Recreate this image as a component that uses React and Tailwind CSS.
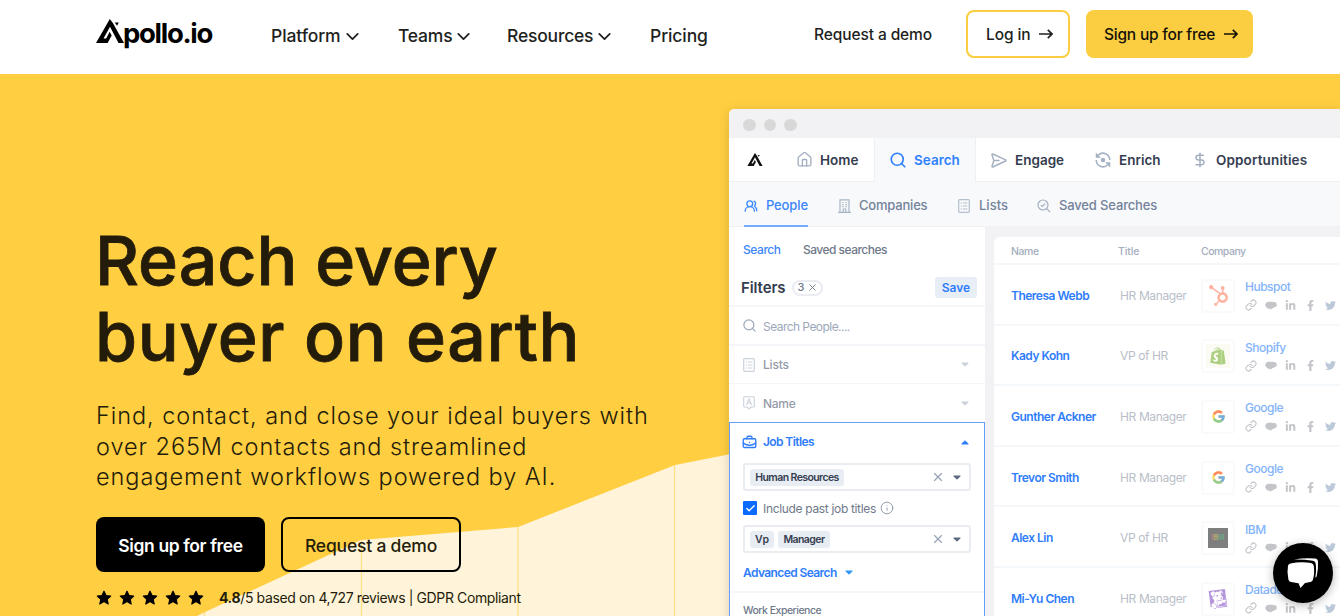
import React from 'react';
import { Search, House, DollarSign, UsersRound, ChevronDown, X, Info, Link, BriefcaseBusiness, Check } from 'lucide-react';
import { FaLinkedinIn, FaFacebookF, FaTwitter, FaHubspot, FaShopify } from 'react-icons/fa';
import { FcGoogle } from 'react-icons/fc';
import { SiDatadog } from 'react-icons/si';

const people = [
    { name: 'Theresa Webb', title: 'HR Manager', company: 'Hubspot' },
    { name: 'Kady Kohn', title: 'VP of HR', company: 'Shopify' },
    { name: 'Gunther Ackner', title: 'HR Manager', company: 'Google' },
    { name: 'Trevor Smith', title: 'HR Manager', company: 'Google' },
    { name: 'Alex Lin', title: 'VP of HR', company: 'IBM' },
    { name: 'Mi-Yu Chen', title: 'HR Manager', company: 'Datadog' },
];

const ApolloMark = ({ className }) => (
    <svg viewBox="0 0 28 24" className={className} fill="currentColor">
        <path d="M0 24 L13.8 0 L17 4.3 L28 24 H22.5 L14 7.8 L7.5 19.6 H10.2 L13.6 12.8 L15.7 16.4 L11.6 24 Z" />
        <path d="M18.8 3.6 H22.8 L21 6.8 Z" />
    </svg>
);

const Arrow = () => (
    <svg width="14" height="10" viewBox="0 0 14 10" fill="none" stroke="currentColor" strokeWidth="1.7">
        <path d="M0 5 H12.8 M8.8 0.8 L13 5 L8.8 9.2" />
    </svg>
);

const Caret = ({ className }) => (
    <svg width="8" height="5" viewBox="0 0 8 5" className={className} fill="currentColor">
        <path d="M1 0.5 H7 Q8 0.6 7.3 1.4 L4.5 4.3 Q4 4.8 3.5 4.3 L0.7 1.4 Q0 0.6 1 0.5 Z" />
    </svg>
);

const ListIcon = ({ className }) => (
    <svg width="12" height="14" viewBox="0 0 12 14" className={className} fill="none" stroke="currentColor" strokeWidth="1.2">
        <rect x="0.7" y="0.7" width="10.6" height="12.6" rx="1" />
        <path d="M2.7 4 H4 M5 4 H9.3 M2.7 7 H4 M5 7 H9.3 M2.7 10 H4 M5 10 H9.3" />
    </svg>
);

const NameIcon = () => (
    <svg width="12" height="14" viewBox="0 0 12 14" className="text-[#cbd2dc]" fill="none" stroke="currentColor" strokeWidth="1.1">
        <path d="M1.6 0.7 H10.4 Q11.3 0.7 11.3 1.6 V10 Q11.3 11 10.4 11 H8 L6 13 L4 11 H1.6 Q0.7 11 0.7 10 V1.6 Q0.7 0.7 1.6 0.7 Z" />
        <path d="M3.5 9 L6 3 L8.5 9 M4.4 7 H7.6" />
    </svg>
);

const SendIcon = () => (
    <svg width="16" height="15" viewBox="0 0 16 15" className="text-[#a3b0c2]" fill="none" stroke="currentColor" strokeWidth="1.4" strokeLinejoin="round" strokeLinecap="round">
        <path d="M1.8 1 L14.6 6.8 Q15.4 7.4 14.6 8 L1.8 14 Q0.8 14.2 1 13.2 L2.8 7.5 L1 1.8 Q0.8 0.8 1.8 1 Z M3 7.5 H8" />
    </svg>
);

const EnrichIcon = () => (
    <svg width="16" height="16" viewBox="0 0 16 16" className="text-[#a3b0c2]" fill="none" stroke="currentColor" strokeWidth="1.5">
        <path d="M3.2 3.2 A6.8 6.8 0 0 1 14.8 8 M12.8 12.8 A6.8 6.8 0 0 1 1.2 8" />
        <path d="M1 1 V5.6 H5.4 Z M15 15 V10.4 H10.6 Z" fill="currentColor" strokeWidth="0.5" />
        <circle cx="8" cy="8" r="1.5" fill="currentColor" />
    </svg>
);

const BuildingIcon = () => (
    <svg width="13" height="14" viewBox="0 0 13 14" className="text-[#a9b5c5]" fill="none" stroke="currentColor" strokeWidth="1.2">
        <path d="M2 13 V0.8 H11 V13 M0 13.3 H13 M5.2 13 V10 H7.8 V13 M4.2 3.5 H5.6 M7.4 3.5 H8.8 M4.2 5.6 H5.6 M7.4 5.6 H8.8 M4.2 7.7 H5.6 M7.4 7.7 H8.8" />
    </svg>
);

const SavedSearchIcon = () => (
    <svg width="14" height="14" viewBox="0 0 14 14" className="text-[#a3b0c2]" fill="none" stroke="currentColor" strokeWidth="1.2">
        <circle cx="6" cy="6" r="5" />
        <path d="M9.7 9.7 L13 13 M3.8 6.2 L5.4 7.5 L8.2 4.6" />
    </svg>
);

const Star = () => (
    <svg width="16" height="16" viewBox="0 0 16 16">
        <path fill="#000" stroke="#000" strokeWidth="1.2" strokeLinejoin="round" d="M8 1.2 L10 5.6 L14.7 6.1 L11.2 9.3 L12.2 14 L8 11.6 L3.8 14 L4.8 9.3 L1.3 6.1 L6 5.6 Z" />
    </svg>
);

// Solid cloud used for the CRM link
const CloudIcon = () => (
    <svg width="12" height="9" viewBox="0 0 12 9" fill="currentColor">
        <path d="M2.8 1 Q4.2 -0.2 5.6 1 Q7 0 8.2 1.2 Q11.6 0.6 11.8 3.4 Q11.8 6 9.2 6.2 Q8.6 7.4 7 7.2 Q5.6 9.4 4 7.6 Q1.8 8 1.4 6 Q-0.6 4.8 0.6 3 Q1 1.2 2.8 1 Z" />
    </svg>
);

const CompanyLogo = ({ company }) => {
    if (company === 'Hubspot') return <FaHubspot size={21} className="text-[#ffb3a2]" />;
    if (company === 'Shopify')
        return (
            <div className="w-6 h-6 bg-[#fbfbf3] flex items-center justify-center">
                <FaShopify size={18} className="text-[#acd080]" />
            </div>
        );
    if (company === 'Google') return <FcGoogle size={15} className="opacity-60" />;
    if (company === 'IBM')
        return (
            <div className="w-5 h-5 bg-[#7e7e7e] flex items-center justify-center text-[7px] font-bold">
                <span className="text-[#c08080]">I</span>
                <span className="text-[#b5b070]">B</span>
                <span className="text-[#6fa585]">M</span>
            </div>
        );
    return <SiDatadog size={20} className="text-[#b596dc]" />;
};

const Tag = ({ children, className }) => (
    <span className={`h-[17px] rounded-[3px] bg-[#e8ecf3] flex items-center justify-center text-[10.5px] font-semibold text-[#343d4f] pt-px ${className}`}>{children}</span>
);

const TagSelect = ({ children }) => (
    <div className="h-[28px] w-[228px] rounded-[3px] border-2 border-[#e9edf2] flex items-center pl-[5px] gap-1">
        {children}
        <X size={14} strokeWidth={2} className="ml-auto text-[#98a4b5]" />
        <Caret className="ml-[4px] mr-[8px] text-[#5b6a80]" />
    </div>
);

const Header = () => (
    <header className="h-[74px] bg-white flex items-start pl-24 text-[#1e1f21]">
        <div className="w-[175px] h-[30px] mt-[19px] flex items-start text-black">
            <ApolloMark className="w-[28px] h-[24px] shrink-0" />
            <span className="text-[27.5px] leading-[30px] font-bold tracking-[-1.3px] -ml-px -mt-px">pollo.io</span>
        </div>
        <nav className="flex h-[72px] items-center text-[17.5px] font-medium">
            <a className="w-[127px] flex items-center tracking-[-0.1px]">Platform<ChevronDown size={21} className="ml-px" /></a>
            <a className="w-[109px] flex items-center tracking-[-0.2px]">Teams<ChevronDown size={21} className="ml-px" /></a>
            <a className="w-[143px] flex items-center tracking-[-0.2px]">Resources<ChevronDown size={21} className="ml-px" /></a>
            <a className="w-[164px] tracking-[-0.1px]">Pricing</a>
        </nav>
        <div className="mt-[10px] h-12 flex items-center text-[15.5px] font-medium tracking-[-0.1px]">
            <a className="w-[152px] pt-0.5">Request a demo</a>
            <a className="w-[104px] h-12 rounded-lg border-2 border-[#fbce41] flex items-center justify-between pl-[18px] pr-[15px]"><span className="pt-0.5">Log in</span><Arrow /></a>
            <a className="ml-4 w-[167px] h-12 rounded-lg bg-[#fbce41] text-[#15120a] flex items-center justify-between pl-[18px] pr-[15px] tracking-[-0.22px]"><span className="pt-0.5">Sign up for free</span><Arrow /></a>
        </div>
    </header>
);

const AppNav = () => (
    <>
        <div className="h-[29px] bg-[#f2f2f4] flex items-center gap-2 pl-[14px] pt-[3px] rounded-tl-[5px]">
            <span className="w-[12.5px] h-[12.5px] rounded-full bg-[#d8d8d8]" />
            <span className="w-[12.5px] h-[12.5px] rounded-full bg-[#d8d8d8]" />
            <span className="w-[12.5px] h-[12.5px] rounded-full bg-[#d8d8d8]" />
        </div>
        <div className="h-[44px] bg-white flex text-[13.5px] font-semibold text-[#343d50]">
            <div className="w-[146px] h-[44px] flex items-center border-b border-r border-[#eef0f4] pl-[18px]">
                <ApolloMark className="w-[16px] h-[13px] text-[#111]" />
                <House size={17} strokeWidth={1.9} className="ml-[33px] text-[#a3b0c2]" />
                <span className="ml-[7px] pt-px">Home</span>
            </div>
            <div className="w-[100px] h-[44px] flex items-center bg-[#f7f9fb] text-[#2f80ff] pl-[14px]">
                <Search size={18} strokeWidth={2.2} />
                <span className="ml-[7px] pt-px">Search</span>
            </div>
            <div className="flex-1 h-[44px] flex items-center border-b border-l border-[#eef0f4] pl-[15px] pt-px">
                <SendIcon />
                <span className="ml-[8px] w-[80px]">Engage</span>
                <EnrichIcon />
                <span className="ml-[8px] w-[73px]">Enrich</span>
                <DollarSign size={16} strokeWidth={2.2} className="text-[#a3b0c2]" />
                <span className="ml-[8px] tracking-[0.13px]">Opportunities</span>
            </div>
        </div>
        <div className="h-[45px] bg-[#f7f9fb] flex text-[13px] font-medium text-[#74829a] pl-[15px] border-b border-[#eef0f4]">
            <div className="w-[64px] h-[45px] mr-[30px] flex items-center text-[#3b86fb] border-b-2 border-[#74abfd] pt-[4px] tracking-[-0.1px]">
                <UsersRound size={14} strokeWidth={2.3} />
                <span className="ml-[8px]">People</span>
            </div>
            <div className="w-[120px] flex items-center tracking-[-0.2px] pt-[3px]">
                <BuildingIcon />
                <span className="ml-[8px]">Companies</span>
            </div>
            <div className="w-[79px] flex items-center pt-[3px]">
                <ListIcon className="text-[#b5bfcd]" />
                <span className="ml-[9px]">Lists</span>
            </div>
            <div className="flex items-center tracking-[-0.15px] pt-[3px]">
                <SavedSearchIcon />
                <span className="ml-[8px]">Saved Searches</span>
            </div>
        </div>
    </>
);

const FilterPanel = () => (
    <aside className="w-[256px] shrink-0 bg-white text-[12px]">
        <div className="h-[43px] flex items-center pl-[14px] pt-0.5 font-medium">
            <span className="w-[60px] tracking-[-0.45px] text-[#3b86fb]">Search</span>
            <span className="tracking-[-0.52px] text-[#6f7989]">Saved searches</span>
        </div>
        <div className="h-[37px] flex items-center pl-3 pr-2 border-b-2 border-[#f5f7f9]">
            <span className="text-[15px] font-semibold text-[#333c4d] pt-0.5 tracking-[-0.1px]">Filters</span>
            <span className="ml-[7px] w-[31px] h-4 rounded-full border-2 border-[#eaecf1] flex items-center justify-center gap-[3px] text-[11px] font-medium text-[#6f7989]">
                3<X size={11} />
            </span>
            <span className="ml-auto w-[42px] h-[21px] rounded-[3px] bg-[#e8eef6] flex items-center justify-center font-semibold text-[#2f7dfb]">Save</span>
        </div>
        <div className="h-[39px] flex items-center pl-[13px] border-b-2 border-[#f3f5f8] text-[#9ca8ba]">
            <Search size={15} />
            <span className="ml-[6px] pt-0.5 tracking-[-0.55px]">Search People....</span>
        </div>
        <div className="h-[38px] flex items-center pl-[14px] pr-[16px] border-b border-[#f3f5f8] font-medium text-[#949ba8]">
            <ListIcon className="text-[#cbd2dc]" />
            <span className="ml-[8px] pt-px tracking-[-0.2px]">Lists</span>
            <Caret className="ml-auto text-[#cbd2dc]" />
        </div>
        <div className="h-[38px] flex items-center pl-[14px] pr-[16px] font-medium text-[#949ba8]">
            <NameIcon />
            <span className="ml-[8px] pt-px tracking-[-0.3px]">Name</span>
            <Caret className="ml-auto text-[#cbd2dc]" />
        </div>
        <div className="h-[220px] border border-[#65a0f6]">
            <div className="h-[40px] flex items-center pl-3 pr-[15px] pb-0.5 font-semibold text-[#2f7dfb]">
                <BriefcaseBusiness size={15} strokeWidth={2.2} />
                <span className="ml-[6px] tracking-[-0.6px]">Job Titles</span>
                <Caret className="ml-auto rotate-180" />
            </div>
            <div className="pl-[13px]">
                <TagSelect><Tag className="w-[94px] tracking-[-0.6px]">Human Resources</Tag></TagSelect>
                <div className="h-[34px] flex items-center text-[#6f7989]">
                    <span className="w-[14px] h-[14px] rounded-[1px] bg-[#0b6bff] flex items-center justify-center text-white">
                        <Check size={11} strokeWidth={3} />
                    </span>
                    <span className="ml-[6px] pt-0.5 tracking-[-0.33px]">Include past job titles</span>
                    <Info size={14} strokeWidth={1.6} className="ml-[4px] text-[#8d98a8]" />
                </div>
                <TagSelect>
                    <Tag className="w-[24px]">Vp</Tag>
                    <Tag className="w-[52px] tracking-[-0.6px]">Manager</Tag>
                </TagSelect>
                <div className="h-[38px] flex items-center font-semibold text-[#2f7dfb] tracking-[-0.6px] pt-px">
                    Advanced Search<Caret className="ml-[8px] text-[#2f97f5]" />
                </div>
            </div>
            <div className="border-t-2 border-[#f5f7fa] pl-[13px] pt-[10px] text-[10.5px] leading-[15px] tracking-[-0.5px] font-medium text-[#6f7989]">Work Experience</div>
        </div>
    </aside>
);

const PeopleTable = () => (
    <section className="flex-1 bg-[#f2f2f5] pl-[9px] pt-[10px]">
        <div className="bg-white rounded-tl-[6px]">
            <div className="h-[28px] flex items-center pl-[17px] pt-[3px] text-[10.5px] font-medium tracking-[-0.45px] text-[#a3adbd] border-b-2 border-[#f6f7f9]">
                <span className="w-[107px]">Name</span>
                <span className="w-[83px] tracking-[-0.1px]">Title</span>
                <span className="tracking-[-0.5px]">Company</span>
            </div>
            {people.map((p) => (
                <div key={p.name} className="h-[60.6px] flex items-center pl-[17px] pt-[3px] border-b-2 border-[#f5f8fb]">
                    <span className="w-[109px] text-[12px] font-semibold tracking-[-0.5px] text-[#2f7dfb]">{p.name}</span>
                    <span className="w-[81px] text-[12px] tracking-[-0.38px] text-[#b9bec8]">{p.title}</span>
                    <span className="w-[34px] h-[34px] rounded-[4px] border-2 border-[#fafafb] flex items-center justify-center">
                        <CompanyLogo company={p.company} />
                    </span>
                    <div className="ml-[10px] pt-px">
                        <div className="text-[12px] leading-[18px] font-medium tracking-[-0.5px] text-[#83b3fc]">{p.company}</div>
                        <div className="h-[18px] flex items-center gap-2 text-[#c3c5c9]">
                            <Link size={12} strokeWidth={2.2} />
                            <CloudIcon />
                            <FaLinkedinIn size={11} />
                            <FaFacebookF size={11} className="mx-px" />
                            <FaTwitter size={11} className="text-[#bcc9d9]" />
                        </div>
                    </div>
                </div>
            ))}
        </div>
    </section>
);

const App = () => {
    return (
        <div className="w-[1340px] h-[616px] overflow-hidden bg-white font-['Inter',sans-serif]">
            <Header />
            <main className="relative h-[542px] bg-[#ffce41] flex overflow-hidden">
                {/* Growth chart behind the copy */}
                <svg className="absolute inset-0" width="1340" height="542" viewBox="0 74 1340 542">
                    <path fill="#fff4d9" d="M197 616 L205 612 L361 540 L518 527 L675 465 L832 434 V616 Z" />
                    <path stroke="#ffe08a" strokeWidth="1.3" d="M204.5 612 V616 M361.5 540 V616 M518 527 V616 M674.5 465 V616" />
                </svg>

                <div className="relative w-[633px] shrink-0 pl-24 pt-[148px] mr-24">
                    <h1 className="text-[68px] leading-[76px] font-medium [-webkit-text-stroke:0.8px_#241c0a] tracking-[-0.05px] text-[#241c0a] whitespace-nowrap -ml-px">
                        Reach every<br />
                        <span className="tracking-[0.65px]">buyer on earth</span>
                    </h1>
                    <p className="mt-[27px] text-[23.5px] leading-[30.5px] tracking-[0.95px] font-light text-[#241c0a] whitespace-nowrap">
                        Find, contact, and close your ideal buyers with<br />
                        over 265M contacts and streamlined<br />
                        engagement workflows powered by AI.
                    </p>
                    <div className="mt-[24px] flex gap-4 text-[17.5px]">
                        <a className="w-[169px] h-[55px] rounded-lg bg-black text-white font-semibold flex items-center justify-center tracking-[-0.38px] pt-[4px]">Sign up for free</a>
                        <a className="w-[180px] h-[55px] rounded-lg border-2 border-black text-[#241c0a] font-medium flex items-center justify-center tracking-[-0.2px] pt-[4px]">Request a demo</a>
                    </div>
                    <div className="mt-[16px] flex items-center gap-[7px] text-[14px] leading-[20px] text-[#241c0a] whitespace-nowrap">
                        <Star /><Star /><Star /><Star /><Star />
                        <span className="ml-[8px] tracking-[-0.38px]"><b>4.8</b>/5 based on 4,727 reviews | GDPR Compliant</span>
                    </div>
                </div>

                <div className="relative mt-[35px] w-[611px] shrink-0 h-[520px] rounded-tl-[5px] shadow-[0_2px_12px_rgba(0,0,0,0.15)] whitespace-nowrap">
                    <AppNav />
                    <div className="flex h-[400px]">
                        <FilterPanel />
                        <PeopleTable />
                    </div>
                </div>
            </main>

            {/* Chat launcher */}
            <button className="fixed left-[1273px] top-[543px] w-[60px] h-[60px] rounded-full bg-black shadow-[0_2px_10px_rgba(0,0,0,0.3)] flex items-center justify-center">
                <svg width="34" height="32" viewBox="0 0 34 32" fill="#fff">
                    <path d="M8 2.6 Q18 0.8 29 1.6 Q32 2 32 5 Q32.4 12 30.7 19 Q30.3 20.5 29.3 20.6 Q30.7 12 29.6 6.3 Q29.3 4.3 27 3.8 Q18 2.4 8 2.6 Z" />
                    <path d="M4.5 6.4 Q15 4.2 25 6 Q27.5 6.4 27.8 9 Q28.8 17 26.8 23 Q26.3 24.6 24.5 25 L19 26 L14.5 31 L12.5 26.2 L5 25 Q3 24.6 2.4 22.5 Q0.8 15 2 8.8 Q2.4 6.8 4.5 6.4 Z" />
                </svg>
            </button>
        </div>
    );
};

export default App;
